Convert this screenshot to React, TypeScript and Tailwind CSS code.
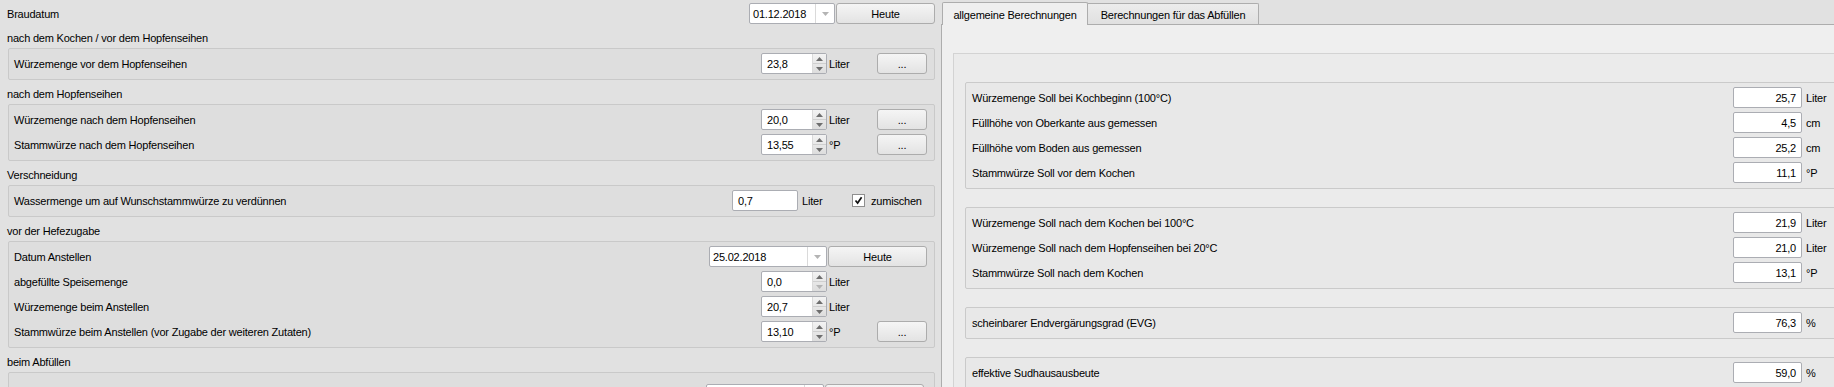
import React from "react";

const Arrow: React.FC<{ up?: boolean; dim?: boolean }> = ({ up, dim }) => (
  <svg width="7" height="4" viewBox="0 0 7 4" className="block">
    <polygon
      points={up ? "0,4 3.5,0 7,4" : "0,0 7,0 3.5,4"}
      fill={dim ? "#b4b4b4" : "#6e6e6e"}
    />
  </svg>
);

const SpinBox: React.FC<{ value: string; downDim?: boolean }> = ({ value, downDim }) => (
  <div className="flex h-[21px] w-[66px] shrink-0 rounded-[2px] border border-[#abadb3] bg-white">
    <span className="flex flex-1 items-center pl-[5px] pt-[1px]">{value}</span>
    <div className="flex w-[14px] flex-col border-l border-[#dadada] bg-linear-to-b from-[#f3f3f3] to-[#dddddd]">
      <div className="flex flex-1 items-center justify-center border-b border-[#cfcfcf]">
        <Arrow up />
      </div>
      <div className="flex flex-1 items-center justify-center">
        <Arrow dim={downDim} />
      </div>
    </div>
  </div>
);

const DateEdit: React.FC<{ value: string; width: string }> = ({ value, width }) => (
  <div className={`flex h-[21px] shrink-0 rounded-[2px] border border-[#abadb3] bg-white ${width}`}>
    <span className="flex flex-1 items-center pl-[3px] pt-[1px]">{value}</span>
    <div className="flex w-[19px] items-center justify-center border-l border-[#dadada]">
      <Arrow dim />
    </div>
  </div>
);

const Button: React.FC<{ label: string; width: string }> = ({ label, width }) => (
  <div
    className={`flex h-[21px] shrink-0 items-center justify-center rounded-[3px] border border-[#acacac] bg-linear-to-b from-[#f5f5f5] to-[#e3e3e3] pt-[1px] ${width}`}
  >
    {label}
  </div>
);

const LineEdit: React.FC<{ value: string; width: string; right?: boolean }> = ({ value, width, right }) => (
  <div
    className={`flex h-[21px] shrink-0 items-center rounded-[2px] border border-[#abadb3] bg-white pt-[1px] ${width} ${
      right ? "justify-end pr-[5px]" : "pl-[5px]"
    }`}
  >
    {value}
  </div>
);

const SectionLabel: React.FC<{ text: string }> = ({ text }) => (
  <div className="flex h-[24px] items-center pt-[5px]">{text}</div>
);

const LeftBox: React.FC<{ children: React.ReactNode; className?: string }> = ({ children, className }) => (
  <div
    className={`ml-[1px] flex flex-col gap-[4px] rounded-[2px] border border-[#c9c9c9] bg-[#dedede] pl-[5px] pr-[7px] pt-[4px] pb-[5px] ${className ?? ""}`}
  >
    {children}
  </div>
);

const SpinRow: React.FC<{ label: string; value: string; unit: string; dots?: boolean; downDim?: boolean }> = ({
  label,
  value,
  unit,
  dots,
  downDim,
}) => (
  <div className="flex h-[21px] items-center">
    <span className="flex-1 pt-[1px]">{label}</span>
    <SpinBox value={value} downDim={downDim} />
    <span className="w-[50px] shrink-0 pl-[2px] pt-[1px]">{unit}</span>
    {dots ? <Button label="..." width="w-[50px]" /> : <span className="w-[50px] shrink-0" />}
  </div>
);

const rightGroups = [
  [
    ["Würzemenge Soll bei Kochbeginn (100°C)", "25,7", "Liter"],
    ["Füllhöhe von Oberkante aus gemessen", "4,5", "cm"],
    ["Füllhöhe vom Boden aus gemessen", "25,2", "cm"],
    ["Stammwürze Soll vor dem Kochen", "11,1", "°P"],
  ],
  [
    ["Würzemenge Soll nach dem Kochen bei 100°C", "21,9", "Liter"],
    ["Würzemenge Soll nach dem Hopfenseihen bei 20°C", "21,0", "Liter"],
    ["Stammwürze Soll nach dem Kochen", "13,1", "°P"],
  ],
  [["scheinbarer Endvergärungsgrad (EVG)", "76,3", "%"]],
  [["effektive Sudhausausbeute", "59,0", "%"]],
];

export default function App() {
  return (
    <div className="flex h-[387px] w-[1834px] overflow-hidden bg-[#e1e1e1] font-['Liberation_Sans',Arial,sans-serif] text-[11px] tracking-[-0.2px] text-black">
      {/* left column */}
      <div className="w-[941px] shrink-0 pl-[7px] pr-[6px] pt-[3px]">
        <div className="flex h-[21px] items-center">
          <span className="flex-1 pt-[1px]">Braudatum</span>
          <DateEdit value="01.12.2018" width="w-[86px]" />
          <div className="w-[1px] shrink-0" />
          <Button label="Heute" width="w-[99px]" />
        </div>

        <SectionLabel text="nach dem Kochen / vor dem Hopfenseihen" />
        <LeftBox>
          <SpinRow label="Würzemenge vor dem Hopfenseihen" value="23,8" unit="Liter" dots />
        </LeftBox>

        <SectionLabel text="nach dem Hopfenseihen" />
        <LeftBox>
          <SpinRow label="Würzemenge nach dem Hopfenseihen" value="20,0" unit="Liter" dots />
          <SpinRow label="Stammwürze nach dem Hopfenseihen" value="13,55" unit="°P" dots />
        </LeftBox>

        <SectionLabel text="Verschneidung" />
        <LeftBox>
          <div className="flex h-[21px] items-center">
            <span className="flex-1 pt-[1px]">Wassermenge um auf Wunschstammwürze zu verdünnen</span>
            <LineEdit value="0,7" width="w-[66px]" />
            <span className="w-[54px] shrink-0 pl-[4px] pt-[1px]">Liter</span>
            <div className="flex h-[13px] w-[13px] shrink-0 items-center justify-center border border-[#8f8f8f] bg-white">
              <svg width="9" height="9" viewBox="0 0 9 9">
                <path d="M1.5 4.5 L3.6 7 L7.6 1.2" stroke="#111" strokeWidth="1.7" fill="none" />
              </svg>
            </div>
            <span className="w-[62px] shrink-0 pl-[6px] pt-[1px]">zumischen</span>
          </div>
        </LeftBox>

        <SectionLabel text="vor der Hefezugabe" />
        <LeftBox>
          <div className="flex h-[21px] items-center">
            <span className="flex-1 pt-[1px]">Datum Anstellen</span>
            <DateEdit value="25.02.2018" width="w-[118px]" />
            <div className="w-[1px] shrink-0" />
            <Button label="Heute" width="w-[99px]" />
          </div>
          <SpinRow label="abgefüllte Speisemenge" value="0,0" unit="Liter" downDim />
          <SpinRow label="Würzemenge beim Anstellen" value="20,7" unit="Liter" />
          <SpinRow
            label="Stammwürze beim Anstellen (vor Zugabe der weiteren Zutaten)"
            value="13,10"
            unit="°P"
            dots
          />
        </LeftBox>

        <SectionLabel text="beim Abfüllen" />
        <LeftBox className="pt-[11px]">
          <div className="flex h-[21px] items-center pr-[3px]">
            <span className="flex-1" />
            <DateEdit value="" width="w-[118px]" />
            <div className="w-[1px] shrink-0" />
            <Button label="" width="w-[99px]" />
          </div>
        </LeftBox>
      </div>

      {/* right column: tab widget */}
      <div className="w-[930px] shrink-0">
        <div className="flex h-[24px] items-end pl-[1px]">
          <div className="relative z-10 -mb-px flex h-[23px] w-[146px] items-center justify-center rounded-t-[2px] border border-b-0 border-[#adadad] bg-[#efefef] pt-[3px]">
            allgemeine Berechnungen
          </div>
          <div className="flex h-[21px] w-[171px] items-center justify-center rounded-tr-[2px] border border-b-0 border-l-0 border-[#adadad] bg-linear-to-b from-[#ececec] to-[#e0e0e0] pt-[2px]">
            Berechnungen für das Abfüllen
          </div>
        </div>
        <div className="h-[400px] border-l border-t border-[#adadad] bg-[#efefef] pl-[11px] pr-[11px] pt-[28px]">
          <div className="h-[400px] border-l border-t border-[#d3d3d3] bg-[#ebebeb] pl-[11px] pr-[11px] pt-[28px]">
            {rightGroups.map((group, gi) => (
              <div
                key={gi}
                className="mb-[18px] flex flex-col gap-[4px] rounded-[2px] border border-[#cacaca] bg-[#e8e8e8] pl-[6px] pr-[4px] pt-[4px] pb-[5px]"
              >
                {group.map(([label, value, unit]) => (
                  <div key={label} className="flex h-[21px] items-center">
                    <span className="flex-1 pt-[1px]">{label}</span>
                    <LineEdit value={value} width="w-[69px]" right />
                    <span className="w-[42px] shrink-0 pl-[4px] pt-[1px]">{unit}</span>
                  </div>
                ))}
              </div>
            ))}
          </div>
        </div>
      </div>
    </div>
  );
}
